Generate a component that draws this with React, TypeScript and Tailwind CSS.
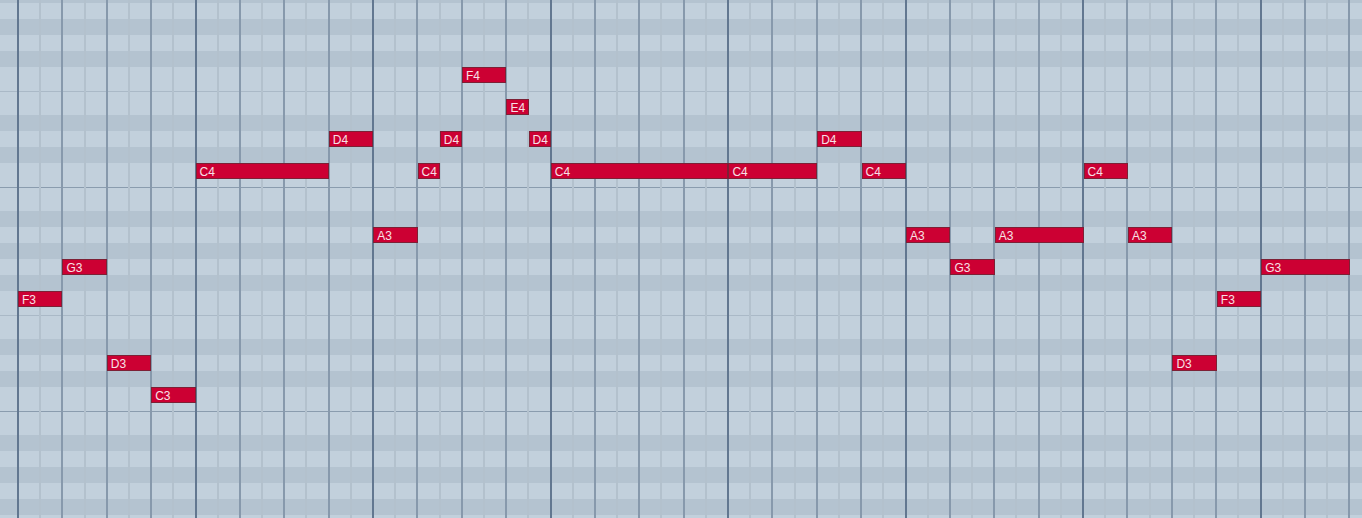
const BEAT = 44.4;
const ORIGIN = 18;

// rows from top, 16px each; "gap" rows sit between E/F and B/C
type Row = { key: string; kind: "white" | "black" | "gap" | "octave" };

const rows: Row[] = [
  { key: "A#4", kind: "black" },
  { key: "A4", kind: "white" },
  { key: "G#4", kind: "black" },
  { key: "G4", kind: "white" },
  { key: "F#4", kind: "black" },
  { key: "F4", kind: "white" },
  { key: "EF4", kind: "gap" },
  { key: "E4", kind: "white" },
  { key: "D#4", kind: "black" },
  { key: "D4", kind: "white" },
  { key: "C#4", kind: "black" },
  { key: "C4", kind: "white" },
  { key: "BC3", kind: "octave" },
  { key: "B3", kind: "white" },
  { key: "A#3", kind: "black" },
  { key: "A3", kind: "white" },
  { key: "G#3", kind: "black" },
  { key: "G3", kind: "white" },
  { key: "F#3", kind: "black" },
  { key: "F3", kind: "white" },
  { key: "EF3", kind: "gap" },
  { key: "E3", kind: "white" },
  { key: "D#3", kind: "black" },
  { key: "D3", kind: "white" },
  { key: "C#3", kind: "black" },
  { key: "C3", kind: "white" },
  { key: "BC2", kind: "octave" },
  { key: "B2", kind: "white" },
  { key: "A#2", kind: "black" },
  { key: "A2", kind: "white" },
  { key: "G#2", kind: "black" },
  { key: "G2", kind: "white" },
  { key: "F#2", kind: "black" },
  { key: "F2", kind: "white" },
];

const TOP = -13;
const rowTop = (key: string) => TOP + rows.findIndex((r) => r.key === key) * 16;

const notes: [string, number, number][] = [
  ["F3", 0, 1],
  ["G3", 1, 1],
  ["D3", 2, 1],
  ["C3", 3, 1],
  ["C4", 4, 3],
  ["D4", 7, 1],
  ["A3", 8, 1],
  ["C4", 9, 0.5],
  ["D4", 9.5, 0.5],
  ["F4", 10, 1],
  ["E4", 11, 0.5],
  ["D4", 11.5, 0.5],
  ["C4", 12, 4],
  ["C4", 16, 2],
  ["D4", 18, 1],
  ["C4", 19, 1],
  ["A3", 20, 1],
  ["G3", 21, 1],
  ["A3", 22, 2],
  ["C4", 24, 1],
  ["A3", 25, 1],
  ["D3", 26, 1],
  ["F3", 27, 1],
  ["G3", 28, 2],
];

const lineClass = (i: number) => {
  if (i % 8 === 0) return "border-[#627790]";
  if (i % 2 === 0) return "border-[#8799ac]";
  return "border-[#b3c1cd]";
};

const PianoRow = ({ row }: { row: Row }) => {
  if (row.kind === "black") return <div className="h-4 shrink-0 bg-[#b4c3d0]" />;
  if (row.kind === "white") return <div className="h-4 shrink-0 bg-[#c2d0dc]" />;
  return (
    <div className="h-4 shrink-0 bg-[#c2d0dc] flex flex-col">
      <div className="h-2" />
      <div className={row.kind === "octave" ? "h-px bg-[#8a9cae]" : "h-px bg-[#aab9c7]"} />
    </div>
  );
};

export default function App() {
  return (
    <div className="relative w-[1362px] h-[518px] overflow-hidden bg-[#c2d0dc] font-['Liberation_Sans',Arial,sans-serif]">
      {/* pitch stripes */}
      <div className="flex flex-col mt-[-13px]">
        {rows.map((r) => (
          <PianoRow key={r.key} row={r} />
        ))}
      </div>

      {/* time grid */}
      <div className="absolute inset-0 flex">
        <div className="w-[17px] shrink-0" />
        {Array.from({ length: 62 }).map((_, i) => (
          <div key={i} className={`w-[22.2px] shrink-0 border-l-2 ${lineClass(i)}`} />
        ))}
      </div>

      {/* notes */}
      <div className="absolute inset-0">
        {notes.map(([pitch, start, len], i) => (
          <div
            key={i}
            className="absolute h-4 bg-[#cc0033] border border-[#7d2035] text-[12px] leading-[16px] text-[#f7e0e6] pl-[3px] overflow-hidden whitespace-nowrap"
            style={{ left: ORIGIN + start * BEAT, width: len * BEAT, top: rowTop(pitch) }}
          >
            {pitch}
          </div>
        ))}
      </div>
    </div>
  );
}
